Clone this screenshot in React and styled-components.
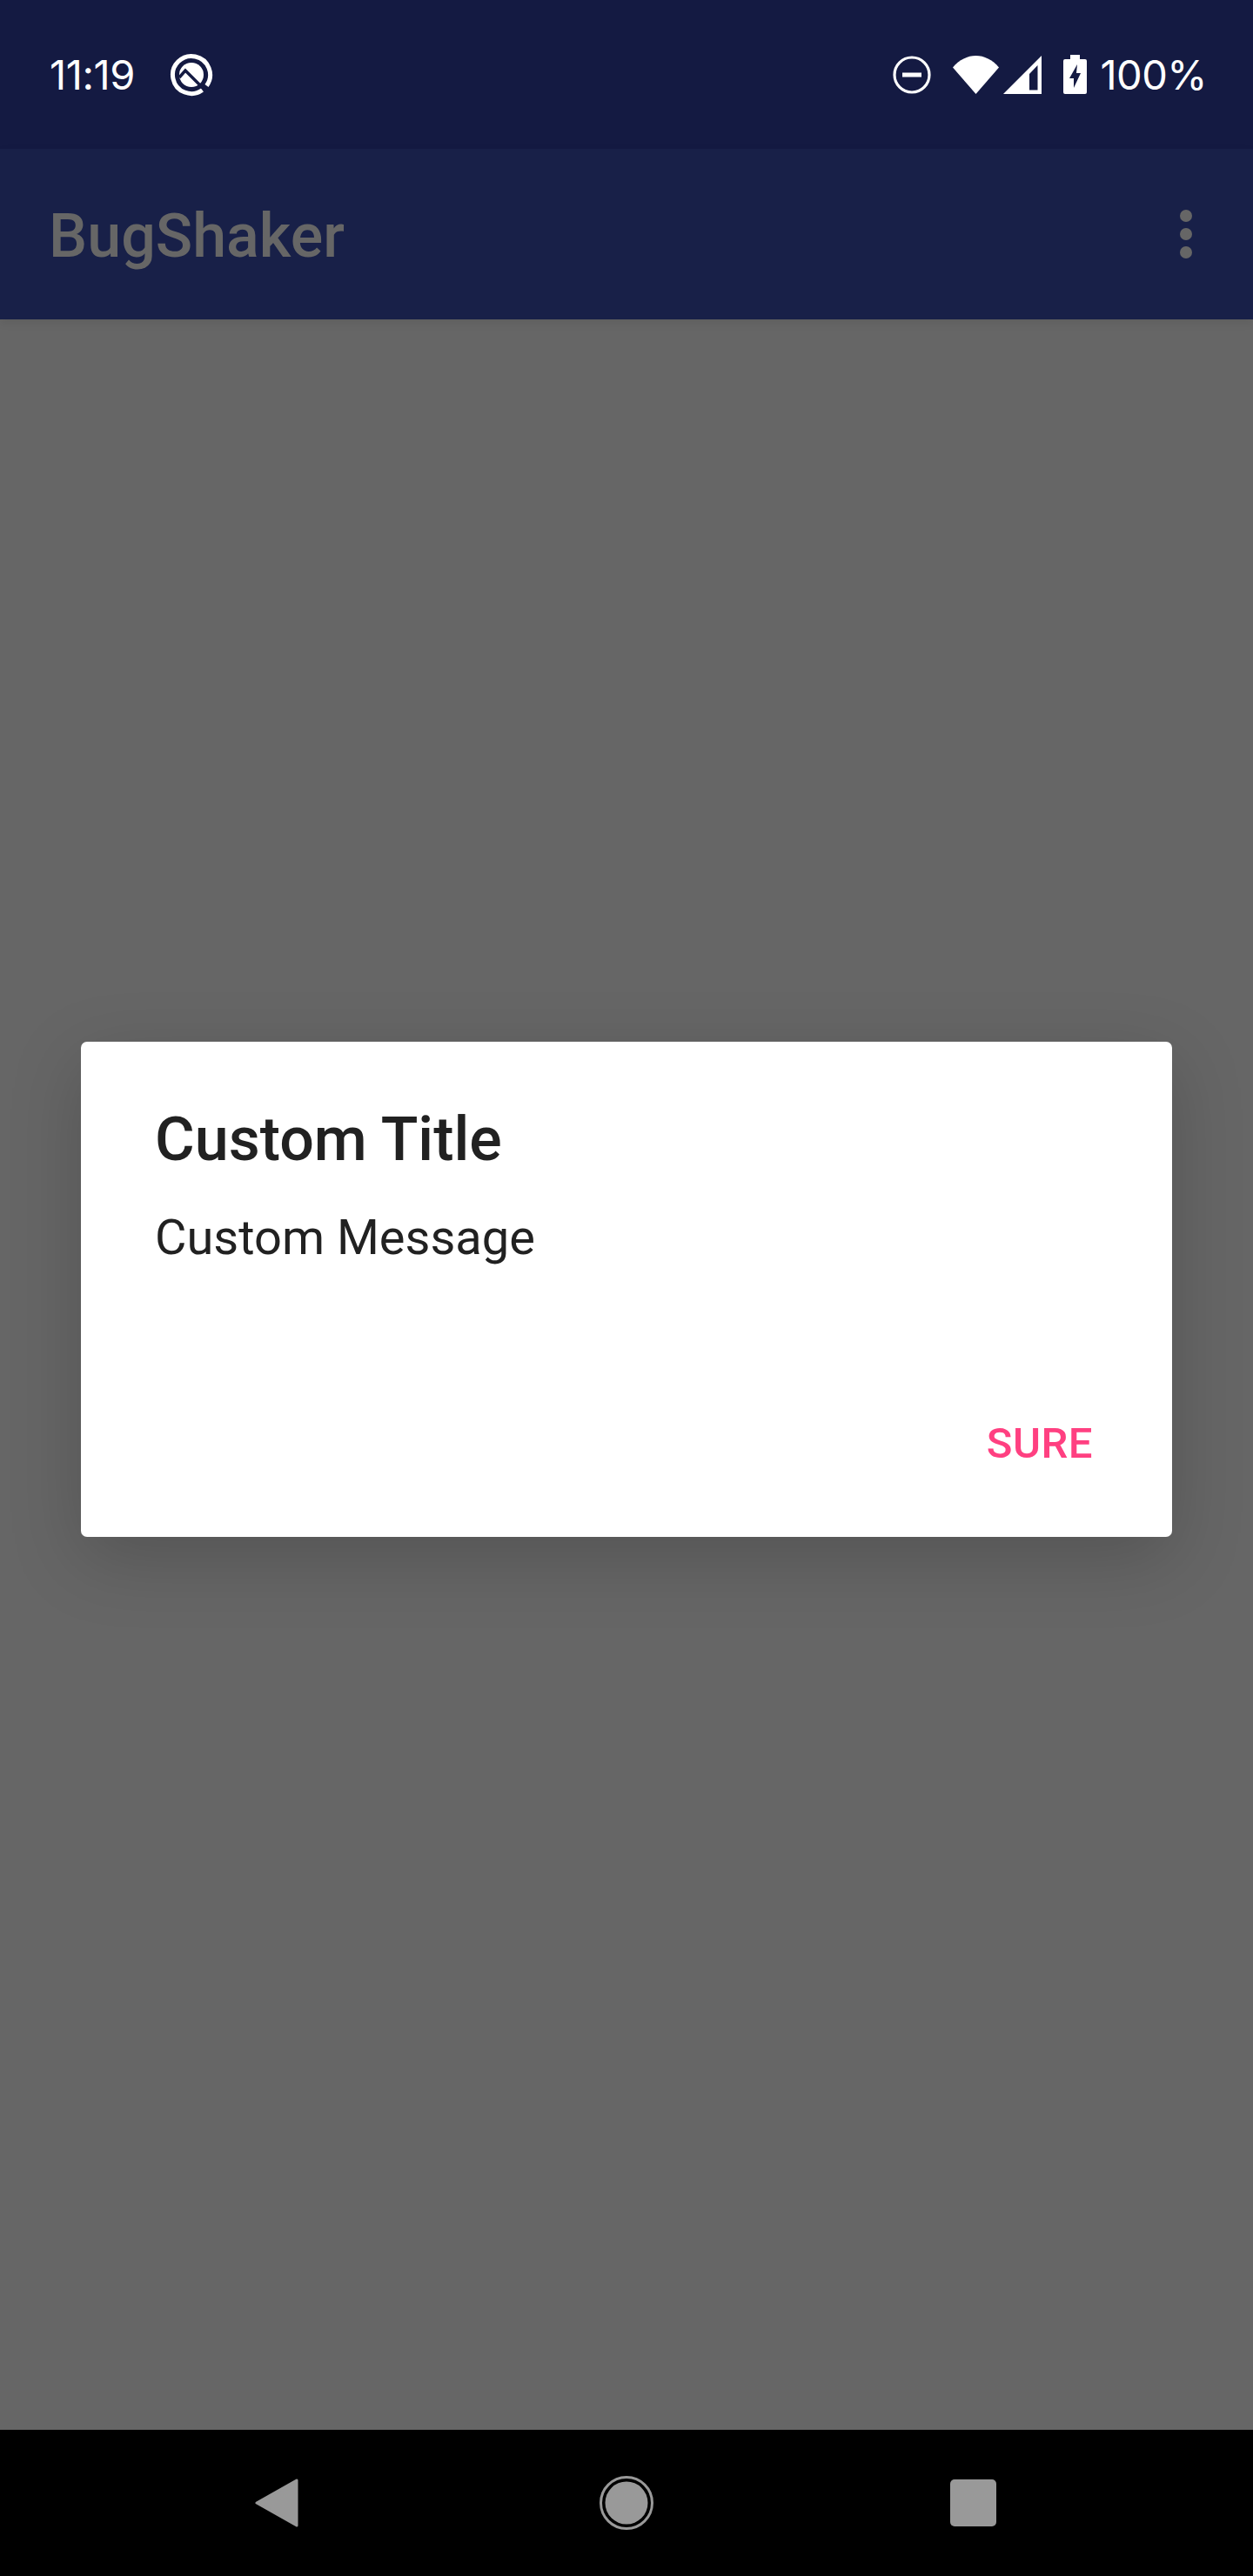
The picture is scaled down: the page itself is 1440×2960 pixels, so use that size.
import styled, { createGlobalStyle } from 'styled-components';

const GlobalStyle = createGlobalStyle`
  html, body {
    margin: 0;
    background: #666;
  }
`;

const Screen = styled.div`
  width: 1440px;
  height: 2960px;
  display: flex;
  flex-direction: column;
  font-family: Roboto, "Liberation Sans", sans-serif;
  overflow: hidden;
`;

const StatusBar = styled.div`
  height: 171px;
  background: #141a42;
  display: flex;
  align-items: center;
  justify-content: space-between;
  padding: 0 53px 0 57px;
  color: #fff;
  font-family: Inter, Roboto, sans-serif;
  font-size: 47px;
`;

const StatusGroup = styled.div`
  display: flex;
  align-items: center;
`;

const StatusText = styled.span`
  line-height: 1;
  letter-spacing: ${(p) => p.$tracking || 0}px;
  margin-left: ${(p) => p.$left || 0}px;
`;

const AppBar = styled.div`
  height: 196px;
  background: #182048;
  display: flex;
  align-items: center;
  justify-content: space-between;
  padding: 0 70px 0 56px;
  position: relative;
  box-shadow: 0 4px 10px rgba(0, 0, 0, 0.08);
`;

const AppTitle = styled.div`
  font-size: 70px;
  font-weight: 500;
  color: #666;
  padding-top: 3px;
`;

const Dots = styled.div`
  display: flex;
  flex-direction: column;
  gap: 7px;
`;

const Dot = styled.span`
  width: 14px;
  height: 14px;
  border-radius: 50%;
  background: #666;
`;

const Content = styled.div`
  flex: 1;
  background: #666;
  padding: 830px 93px 0;
`;

const Dialog = styled.div`
  height: 569px;
  box-sizing: border-box;
  background: #fff;
  border-radius: 7px;
  padding: 70px 85px 0;
  box-shadow: 0 24px 84px rgba(0, 0, 0, 0.18);
  color: #212121;
  display: flex;
  flex-direction: column;
`;

const DialogTitle = styled.div`
  font-size: 70px;
  font-weight: 500;
  line-height: 84px;
`;

const DialogMessage = styled.div`
  font-size: 56px;
  line-height: 66px;
  margin-top: 38px;
`;

const DialogActions = styled.div`
  display: flex;
  justify-content: flex-end;
  margin-top: 175px;
  padding-right: 6px;
`;

const ActionButton = styled.div`
  font-size: 49px;
  font-weight: 500;
  letter-spacing: 0.5px;
  color: #ff4081;
  line-height: 58px;
`;

const NavBar = styled.div`
  height: 168px;
  background: #000;
  display: flex;
  align-items: center;
  padding: 0 0 0 290px;
`;

const NavSlot = styled.div`
  display: flex;
  align-items: center;
  margin-left: ${(p) => p.$gap}px;
`;

const Glyph = styled.svg`
  display: block;
  margin-left: ${(p) => p.$left || 0}px;
`;

const QIcon = () => (
  <Glyph $left={40} width="50" height="50" viewBox="0 0 50 50">
    <path d="M37.5 42.5A21.5 21.5 0 1 1 42.5 37.5" fill="none" stroke="#fff" strokeWidth="5" />
    <circle cx="25" cy="25" r="14" fill="#fff" />
    <path d="M11 28L18 20L38 40" fill="none" stroke="#141a42" strokeWidth="3.5" />
  </Glyph>
);

const App = () => (
  <Screen>
    <GlobalStyle />
    <StatusBar>
      <StatusGroup>
        <StatusText $tracking={-0.4}>11:19</StatusText>
        <QIcon />
      </StatusGroup>
      <StatusGroup>
        <Glyph width="44" height="44" viewBox="0 0 44 44">
          <circle cx="22" cy="22" r="20" fill="none" stroke="#fff" strokeWidth="3.2" />
          <rect x="11" y="19.5" width="22" height="5" fill="#fff" />
        </Glyph>
        <Glyph $left={25} width="53" height="44" viewBox="0 0 53 44">
          <path d="M0 13.5C15 -4.5 38 -4.5 53 13.5L26.5 44Z" fill="#fff" />
        </Glyph>
        <Glyph $left={5} width="44" height="44" viewBox="0 0 44 44">
          <path d="M44 0V44H0ZM39.5 11L30 21V39.5H39.5Z" fill="#fff" fillRule="evenodd" />
        </Glyph>
        <Glyph $left={25} width="27" height="45" viewBox="0 0 27 45">
          <path
            d="M8 0H19V5H25A2 2 0 0 1 27 7V43A2 2 0 0 1 25 45H2A2 2 0 0 1 0 43V7A2 2 0 0 1 2 5H8ZM16 11L7 27H12V38L20 21H15Z"
            fill="#fff"
            fillRule="evenodd"
          />
        </Glyph>
        <StatusText $left={15} $tracking={-0.5}>100%</StatusText>
      </StatusGroup>
    </StatusBar>
    <AppBar>
      <AppTitle>BugShaker</AppTitle>
      <Dots>
        <Dot />
        <Dot />
        <Dot />
      </Dots>
    </AppBar>
    <Content>
      <Dialog>
        <DialogTitle>Custom Title</DialogTitle>
        <DialogMessage>Custom Message</DialogMessage>
        <DialogActions>
          <ActionButton>SURE</ActionButton>
        </DialogActions>
      </Dialog>
    </Content>
    <NavBar>
      <NavSlot $gap={3}>
        <svg width="50" height="56" viewBox="0 0 50 56">
          <path d="M48 2V54L2 28Z" fill="#999" stroke="#999" strokeWidth="3" strokeLinejoin="round" />
        </svg>
      </NavSlot>
      <NavSlot $gap={346}>
        <svg width="62" height="62" viewBox="0 0 62 62">
          <circle cx="31" cy="31" r="29.5" fill="none" stroke="#999" strokeWidth="3" />
          <circle cx="31" cy="31" r="24.5" fill="#999" />
        </svg>
      </NavSlot>
      <NavSlot $gap={341}>
        <svg width="53" height="54" viewBox="0 0 53 54">
          <rect width="53" height="54" rx="5" fill="#999" />
        </svg>
      </NavSlot>
    </NavBar>
  </Screen>
);

export default App;
